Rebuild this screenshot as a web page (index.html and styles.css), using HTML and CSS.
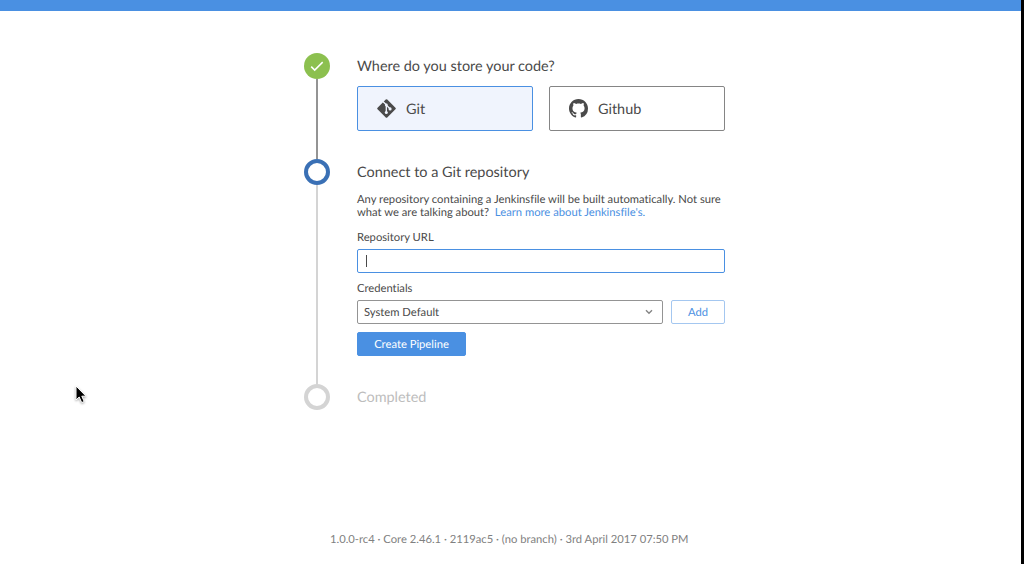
FILE: index.html
```html
<!DOCTYPE html>
<html lang="en">
<head>
<meta charset="utf-8">
<title>Create Pipeline</title>
<link rel="stylesheet" href="styles.css">
</head>
<body>
<div class="page">
  <header class="topbar"></header>
  <main class="steps">
    <section class="step step-done">
      <div class="rail">
        <span class="marker marker-done"><svg width="26" height="26" viewBox="0 0 26 26"><path d="M7.2 13.600l3.500 3.500 8-8" fill="none" stroke="#fff" stroke-width="1.500"/></svg></span>
        <span class="line line-done"></span>
      </div>
      <div class="body">
        <h2 class="title">Where do you store your code?</h2>
        <div class="cards">
          <button class="card card-selected"><svg class="icon" width="19" height="19" viewBox="0 0 20 20"><path fill="#4a4a4a" d="M9.200.6a1.100 1.100 0 0 1 1.600 0l8.600 8.600a1.100 1.100 0 0 1 0 1.600l-8.600 8.600a1.100 1.100 0 0 1-1.600 0L.6 10.800a1.100 1.100 0 0 1 0-1.600z"/><path d="M6.200 2.600l3.600 3.600v8.300M9.800 6.300l4.100 4.300" fill="none" stroke="#f0f4fd" stroke-width="1.400"/><g fill="#f0f4fd"><circle cx="9.800" cy="6.300" r="1.500"/><circle cx="9.800" cy="14.300" r="1.600"/><circle cx="13.800" cy="10.400" r="1.600"/></g></svg><span>Git</span></button>
          <button class="card"><svg class="icon" width="19" height="19" viewBox="0 0 16 16"><path fill="#4a4a4a" d="M8 0C3.580 0 0 3.580 0 8c0 3.540 2.290 6.530 5.470 7.590.4.070.55-.17.55-.38 0-.19-.01-.82-.01-1.490-2.010.37-2.530-.49-2.690-.94-.09-.23-.48-.94-.82-1.130-.28-.15-.68-.52-.01-.53.63-.01 1.080.58 1.230.82.72 1.210 1.870.87 2.330.66.07-.52.28-.87.51-1.070-1.780-.2-3.640-.89-3.640-3.950 0-.87.31-1.590.82-2.150-.08-.2-.36-1.020.08-2.120 0 0 .67-.21 2.200.82.64-.18 1.320-.27 2-.27s1.360.09 2 .27c1.530-1.040 2.200-.82 2.200-.82.44 1.100.16 1.920.08 2.120.51.56.82 1.270.82 2.150 0 3.070-1.870 3.750-3.650 3.950.29.25.54.73.54 1.480 0 1.070-.01 1.930-.01 2.200 0 .21.15.46.55.38A8.010 8.010 0 0 0 16 8c0-4.420-3.580-8-8-8z"/></svg><span>Github</span></button>
        </div>
      </div>
    </section>
    <section class="step step-active">
      <div class="rail">
        <span class="marker marker-active"></span>
        <span class="line"></span>
      </div>
      <div class="body">
        <h2 class="title">Connect to a Git repository</h2>
        <p class="intro">Any repository containing a Jenkinsfile will be built automatically. Not sure<br>what we are talking about?&nbsp; <a class="link">Learn more about Jenkinsfile's.</a></p>
        <div class="label">Repository URL</div>
        <div class="field field-focus"><span class="caret"></span></div>
        <div class="label">Credentials</div>
        <div class="row">
          <div class="field select"><span>System Default</span><svg width="8" height="6" viewBox="0 0 8 6"><path d="M1 1.200l3 3 3-3" fill="none" stroke="#858585" stroke-width="1.400"/></svg></div>
          <button class="button button-outline">Add</button>
        </div>
        <button class="button button-primary">Create Pipeline</button>
      </div>
    </section>
    <section class="step">
      <div class="rail"><span class="marker"></span></div>
      <div class="body"><h2 class="title title-muted">Completed</h2></div>
    </section>
  </main>
  <footer class="footer">1.0.0-rc4 · Core 2.46.1 · 2119ac5 · (no branch) · 3rd April 2017 07:50 PM</footer>
  <svg class="pointer" width="16" height="22" viewBox="0 0 16 22"><path d="M2 2v14l3.200-3 2.500 5.600 2.500-1.100-2.400-5.300H12z" fill="#000" stroke="#fff" stroke-width="1"/></svg>
</div>
</body>
</html>
```
FILE: styles.css
```css
* { box-sizing: border-box; }
body {
  margin: 0;
  background: #000;
  color: #4a4a4a;
  font-family: Lato, "Liberation Sans", sans-serif;
  font-size: 11.22px;
  font-variant-ligatures: none;
  text-rendering: geometricPrecision;
}
.page {
  position: relative;
  display: flex;
  flex-direction: column;
  width: 1021px;
  height: 564px;
  background: #fff;
}
.topbar { height: 11px; background: #4a90e2; }
.steps { flex: 1; padding: 42px 0 0 304px; }
.step { display: flex; gap: 27px; }
.step-done { height: 106px; }
.step-active { height: 225px; }
.rail { display: flex; flex-direction: column; align-items: center; width: 26px; }
.marker {
  flex: none;
  width: 26px;
  height: 26px;
  border: 4px solid #d4d4d4;
  border-radius: 50%;
}
.marker svg { display: block; }
.marker-done { border: 0; background: #8cc04f; }
.marker-active { border-color: #3a70b5; }
.line { flex: 1; width: 2px; background: #d4d4d4; }
.line-done { background: #949494; }
.body { width: 368px; }
.title { height: 26px; margin: 0; font-size: 14.43px; font-weight: 400; line-height: 27px; }
.title-muted { color: #bdbdbd; }
.cards { display: flex; gap: 16px; margin-top: 7px; }
.card {
  display: flex;
  align-items: center;
  gap: 10px;
  width: 176px;
  height: 45px;
  padding: 0 0 0 19px;
  border: 1px solid #858585;
  border-radius: 2px;
  background: #fff;
  color: inherit;
  font: 14.43px Lato, "Liberation Sans", sans-serif;
  text-rendering: inherit;
}
.card span { padding-top: 2px; }
.card-selected { border-color: #4a90e2; background: #f0f4fd; }
.intro { margin: 8px 0 11px; line-height: 13px; white-space: nowrap; }
.link { color: #4a90e2; }
.label { height: 19px; line-height: 16px; }
.field {
  display: flex;
  align-items: center;
  height: 24px;
  margin-bottom: 8px;
  padding: 0 6px;
  border: 1px solid #949494;
  border-radius: 2px;
}
.field-focus { padding-left: 8px; border-color: #4a90e2; }
.caret { width: 1px; height: 12px; background: #4a4a4a; }
.row { display: flex; gap: 8px; }
.select { width: 306px; justify-content: space-between; padding-right: 9px; }
.button {
  height: 24px;
  padding: 0;
  border: 1px solid #4a90e2;
  border-radius: 2px;
  font: 11.22px Lato, "Liberation Sans", sans-serif;
  text-rendering: inherit;
}
.button-outline { width: 54px; border-color: #a4c7f0; background: #fff; color: #4a90e2; }
.button-primary { display: block; width: 109px; background: #4a90e2; color: #fff; }
.footer { height: 34px; padding-left: 330px; color: #808080; line-height: 20px; white-space: nowrap; }
.pointer { position: absolute; left: 74px; top: 384px; filter: drop-shadow(0 1px 1px rgba(0, 0, 0, .35)); }
```
